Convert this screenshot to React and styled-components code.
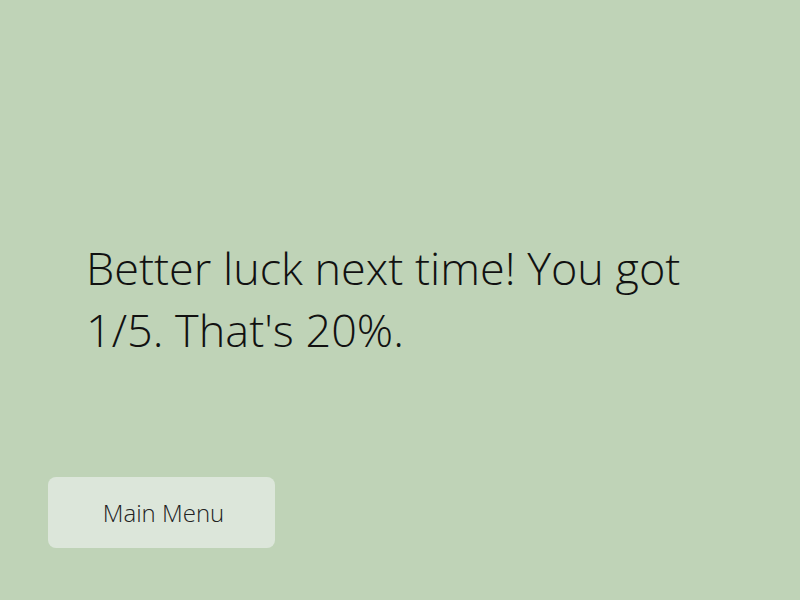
import React from "react";
import styled, { createGlobalStyle } from "styled-components";

const GlobalStyle = createGlobalStyle`
    html, body {
        margin: 0;
        padding: 0;
        background-color: #bfd3b7;
    }
    body {
        font-family: "Open Sans", "Liberation Sans", sans-serif;
        font-weight: 300;
        color: #111;
    }
`

const Page = styled.main`
    width: 800px;
    height: 600px;
    display: flex;
    flex-direction: column;
    box-sizing: border-box;
    padding: 237px 48px 0 48px;
`

const Result = styled.p`
    margin: 0 0 0 38px;
    width: 640px;
    font-size: 45px;
    line-height: 62px;
    font-weight: 300;
`

const MenuButton = styled.button`
    margin-top: 116px;
    width: 227px;
    height: 71px;
    padding: 0 0 0 4px;
    border: none;
    border-radius: 8px;
    background-color: #dce6da;
    font-family: "Open Sans", "Liberation Sans", sans-serif;
    font-weight: 300;
    font-size: 24px;
    color: #222;
    cursor: pointer;
`

function App() {
    return (
        <>
            <GlobalStyle />
            <Page>
                <Result>Better luck next time! You got 1/5. That's 20%.</Result>
                <MenuButton>Main Menu</MenuButton>
            </Page>
        </>
    )
}
export default App
